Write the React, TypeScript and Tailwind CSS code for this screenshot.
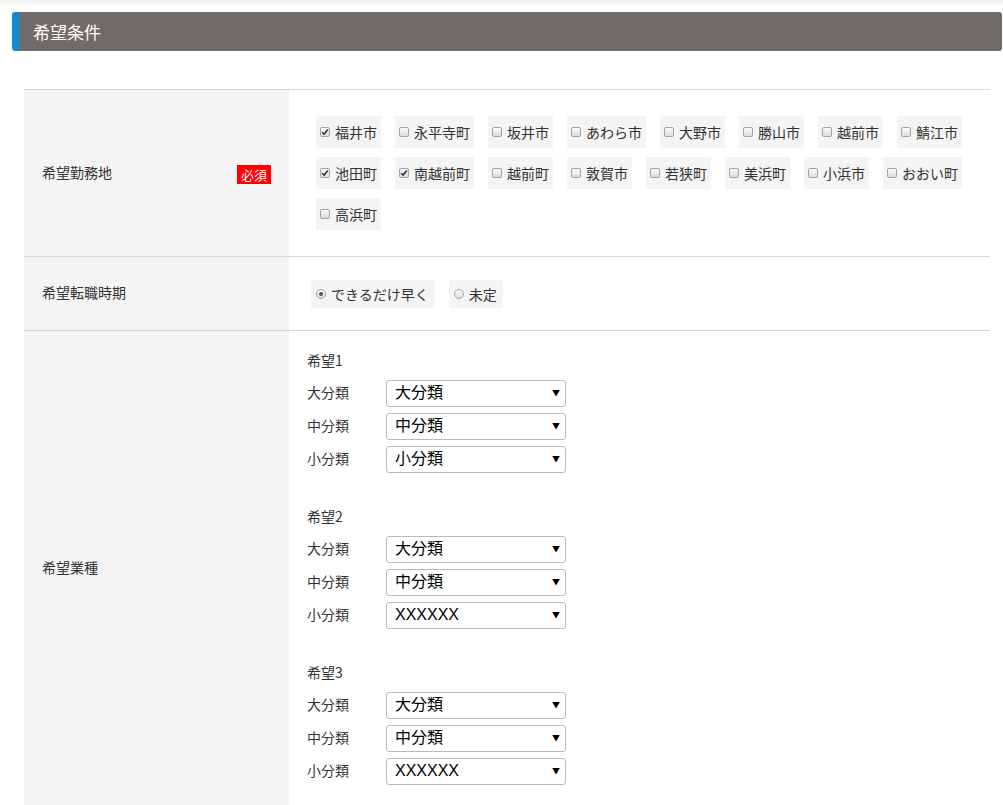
import React from "react";

const font = { fontFamily: '"Noto Sans CJK JP", "Noto Sans", sans-serif' };

const areas = [
  { name: "福井市", checked: true },
  { name: "永平寺町", checked: false },
  { name: "坂井市", checked: false },
  { name: "あわら市", checked: false },
  { name: "大野市", checked: false },
  { name: "勝山市", checked: false },
  { name: "越前市", checked: false },
  { name: "鯖江市", checked: false },
  { name: "池田町", checked: true },
  { name: "南越前町", checked: true },
  { name: "越前町", checked: false },
  { name: "敦賀市", checked: false },
  { name: "若狭町", checked: false },
  { name: "美浜町", checked: false },
  { name: "小浜市", checked: false },
  { name: "おおい町", checked: false },
  { name: "高浜町", checked: false },
];

const wishes = [
  ["大分類", "中分類", "小分類"],
  ["大分類", "中分類", "XXXXXX"],
  ["大分類", "中分類", "XXXXXX"],
];

function CheckBox({ checked }: { checked: boolean }) {
  return (
    <span className="w-[10px] h-[10px] rounded-[2px] border border-[#a3a3a3] bg-gradient-to-b from-[#fafafa] to-[#dcdcdc] flex items-center justify-center flex-shrink-0">
      {checked && (
        <svg width="8" height="8" viewBox="0 0 8 8">
          <path d="M1.2 4.2 L3.1 6.1 L6.9 1.6" stroke="#333" strokeWidth="1.6" fill="none" />
        </svg>
      )}
    </span>
  );
}

function Radio({ checked }: { checked: boolean }) {
  return (
    <span className="w-[10px] h-[10px] rounded-full border border-[#a3a3a3] bg-gradient-to-b from-[#fafafa] to-[#dcdcdc] flex items-center justify-center flex-shrink-0">
      {checked && <span className="w-[4px] h-[4px] rounded-full bg-[#555]" />}
    </span>
  );
}

function Select({ value }: { value: string }) {
  return (
    <div className="relative w-[180px] h-[27px]">
      <select
        defaultValue={value}
        className="appearance-none w-full h-full border border-[#b9b9b9] rounded-[3px] bg-white pl-[8px] pr-5 text-[16px] font-normal text-black leading-none"
        style={{ fontFamily: '"Liberation Sans", "Noto Sans CJK JP", sans-serif' }}
      >
        <option>{value}</option>
      </select>
      <span className="absolute right-[6px] top-[8px] text-[8px] text-black pointer-events-none">▼</span>
    </div>
  );
}

export default function App() {
  return (
    <div className="w-[1003px] min-h-[805px] bg-white text-[#333]" style={font}>
      <div className="h-[6px] bg-gradient-to-b from-[#f1f1f1] to-white" />
      <div className="mt-[6px] ml-[12px] mr-[1px]">
        {/* Header */}
        <div className="h-[39px] bg-[#6f6b69] rounded-[3px] border-l-[7px] border-[#0a8fd3] flex items-center pl-[14px]">
          <h2 className="text-[17px] text-white leading-none">希望条件</h2>
        </div>

        {/* Table */}
        <div className="mx-[12px] mt-[38px] border-t border-[#dadada]">
          {/* 希望勤務地 */}
          <div className="flex border-b border-[#d6d6d6]">
            <div className="w-[265px] flex-shrink-0 bg-[#f4f4f4] flex items-center justify-between px-[18px]">
              <span className="text-[14px] -mt-[2px]">希望勤務地</span>
              <span className="bg-[#ff0000] text-white text-[13px] leading-[19px] h-[19px] px-[4px] mt-[3px]">必須</span>
            </div>
            <div className="flex-1 pl-[27px] pr-[12px] pt-[26px] pb-[26px] flex flex-wrap gap-x-[14px] gap-y-[9px]">
              {areas.map((a) => (
                <label key={a.name} className="h-[32px] bg-[#f4f4f4] flex items-center gap-[5px] px-[4px] text-[14px] leading-none">
                  <CheckBox checked={a.checked} />
                  <span>{a.name}</span>
                </label>
              ))}
            </div>
          </div>

          {/* 希望転職時期 */}
          <div className="flex border-b border-[#d6d6d6]">
            <div className="w-[265px] flex-shrink-0 bg-[#f4f4f4] flex items-center px-[18px]">
              <span className="text-[14px] -mt-[2px]">希望転職時期</span>
            </div>
            <div className="flex-1 pl-[22px] pt-[23px] pb-[22px] flex gap-[14px]">
              {[
                { name: "できるだけ早く", checked: true },
                { name: "未定", checked: false },
              ].map((r) => (
                <label key={r.name} className="h-[28px] bg-[#f4f4f4] flex items-center gap-[5px] pl-[5px] pr-[6px] text-[14px] leading-none">
                  <Radio checked={r.checked} />
                  <span>{r.name}</span>
                </label>
              ))}
            </div>
          </div>

          {/* 希望業種 */}
          <div className="flex">
            <div className="w-[265px] flex-shrink-0 bg-[#f4f4f4] flex items-center px-[18px]">
              <span className="text-[14px] -mt-[2px]">希望業種</span>
            </div>
            <div className="flex-1 pl-[18px] pt-[19px] pb-[21px] flex flex-col gap-[34px]">
              {wishes.map((w, i) => (
                <div key={i}>
                  <p className="text-[14px] leading-[20px] mb-[9px]">希望{i + 1}</p>
                  <div className="flex flex-col gap-[6px]">
                    {["大分類", "中分類", "小分類"].map((label, j) => (
                      <div key={label} className="flex items-center">
                        <span className="w-[79px] text-[14px] leading-none -mt-[2px]">{label}</span>
                        <Select value={w[j]} />
                      </div>
                    ))}
                  </div>
                </div>
              ))}
            </div>
          </div>
        </div>
      </div>
    </div>
  );
}
